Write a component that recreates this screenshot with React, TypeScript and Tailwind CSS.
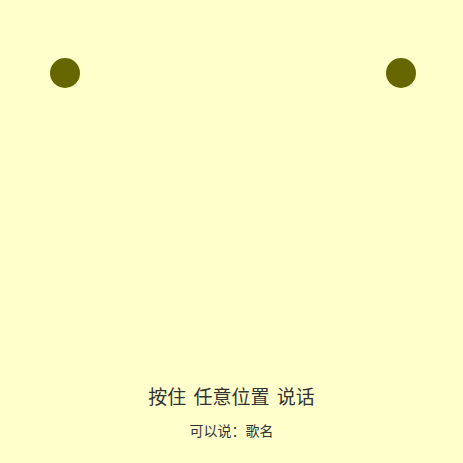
export default function App() {
  return (
    <div className="flex h-[463px] w-[463px] flex-col bg-[#ffffcc] font-['Noto_Sans_CJK_SC',sans-serif]">
      <div className="flex justify-between pl-[50px] pr-[47px] pt-[58px]">
        <div className="h-[30px] w-[30px] rounded-full bg-[#666600]" />
        <div className="h-[30px] w-[30px] rounded-full bg-[#666600]" />
      </div>
      <div className="mt-auto flex flex-col items-center pb-[23px] text-[#333333]">
        <p className="text-[19px] leading-[24px] [word-spacing:3px]">按住 任意位置 说话</p>
        <p className="mt-[12px] text-[14px] leading-[20px]">可以说：歌名</p>
      </div>
    </div>
  )
}
